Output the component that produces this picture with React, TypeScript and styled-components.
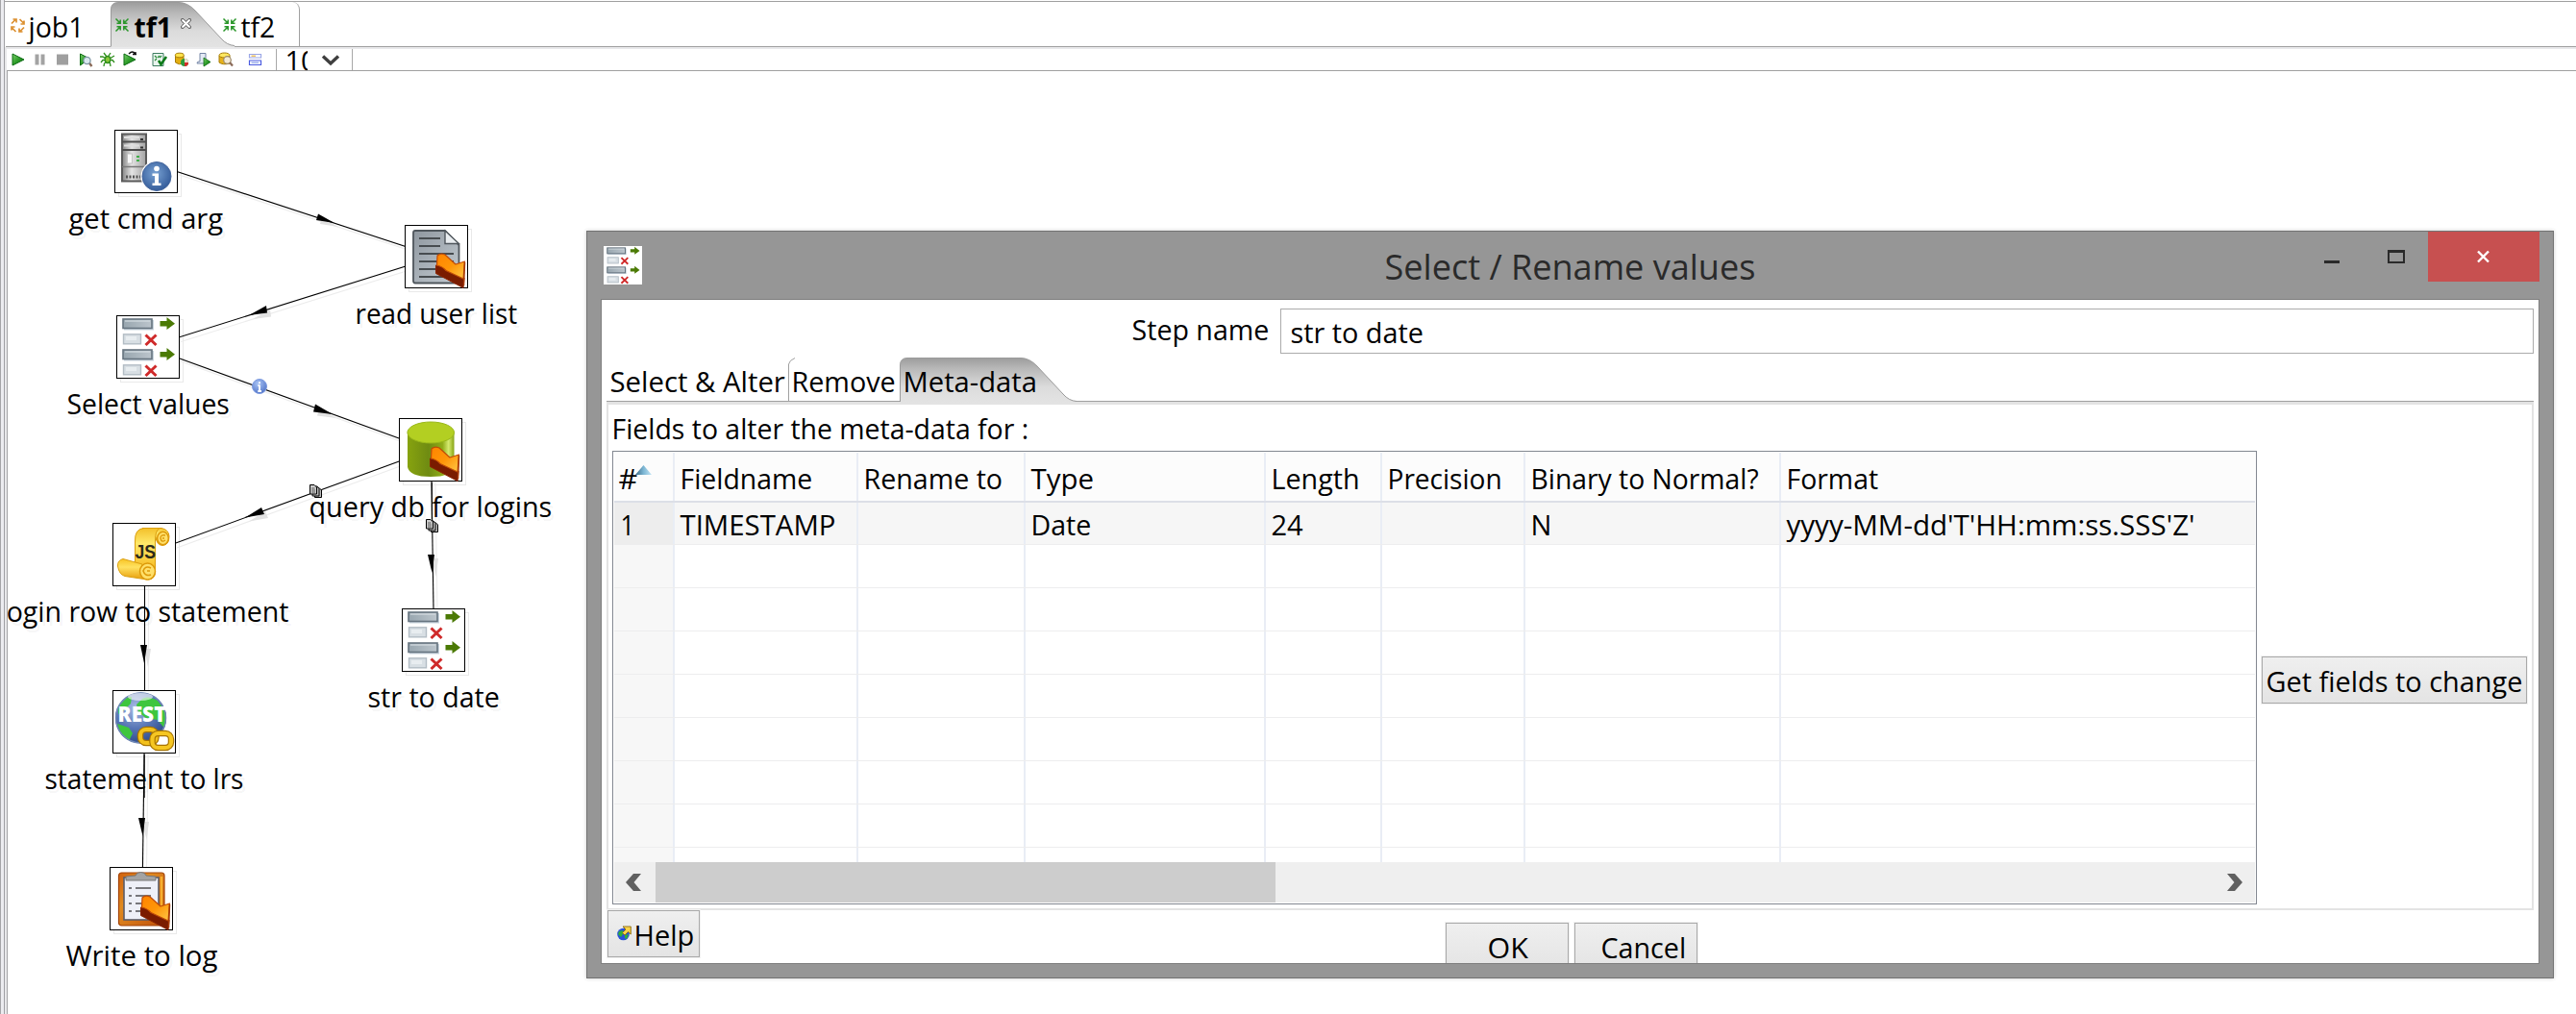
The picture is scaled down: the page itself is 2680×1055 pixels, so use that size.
import React, { useLayoutEffect, useRef, useState } from 'react';
import styled, { createGlobalStyle } from 'styled-components';

const Global = createGlobalStyle`
  * { box-sizing: border-box; }
  html, body { margin: 0; padding: 0; background: #fff; }
  body { overflow: hidden; }
  svg { display: block; flex: none; overflow: visible; }
`;

/* ---------- text condensed to a fixed measure ---------- */

const Measure = styled.span<{ $w: number }>`
  display: block;
  flex: none;
  width: ${(p) => p.$w}px;
  white-space: pre;
`;
const Condensed = styled.span`
  display: inline-block;
  transform-origin: 0 50%;
`;

function Fit({ w, children }: { w: number; children: string }) {
  const ref = useRef<HTMLSpanElement>(null);
  const [scale, setScale] = useState(1);
  useLayoutEffect(() => {
    if (ref.current) setScale((w + 3) / ref.current.offsetWidth);
  }, [w, children]);
  return (
    <Measure $w={w}>
      <Condensed ref={ref} style={{ transform: `translateX(-1.5px) scaleX(${scale})` }}>
        {children}
      </Condensed>
    </Measure>
  );
}

/* ---------- shell ---------- */

const Shell = styled.div`
  position: relative;
  display: flex;
  width: 2680px;
  height: 1055px;
  overflow: hidden;
  background: #fff;
  color: #000;
  font: 29px/40px 'Open Sans', 'Noto Sans', sans-serif;
`;
const Gutter = styled.div`
  width: 5px;
  border-left: 1px solid #a5a5a8;
  border-right: 1px solid #a0a0a4;
  background: #ececf0;
`;
const Main = styled.div`
  flex: 1;
  display: flex;
  flex-direction: column;
  min-width: 0;
  border-top: 1px solid #a0a0a0;
  margin-top: 1px;
`;
const TabStrip = styled.div`
  display: flex;
  height: 47px;
  margin-left: 1px;
  border-bottom: 1px solid #a0a0a0;
`;
const Tab = styled.div<{ $w: number; $pad: number; $gap: number; $bold?: boolean; $closed?: boolean }>`
  position: relative;
  display: flex;
  align-items: flex-start;
  width: ${(p) => p.$w}px;
  height: 47px;
  padding: 6px 0 0 ${(p) => p.$pad}px;
  gap: ${(p) => p.$gap}px;
  font-weight: ${(p) => (p.$bold ? 700 : 400)};
  ${(p) => p.$closed && 'border-right: 1px solid #a0a0a0; border-top-right-radius: 8px; height: 46px;'}
  svg { margin-top: 11px; }
`;
const TabShape = styled.span`
  position: absolute;
  left: 0;
  top: 0;
  svg { margin: 0; }
`;
const Lift = styled.span`
  position: relative;
  display: block;
`;
const CloseWrap = styled.span`
  display: block;
  margin: 2px 0 0 4px;
`;
const Nudge = styled.span`
  margin-left: -12px;
`;
const ToolFrame = styled.div`
  height: 24px;
  padding: 2px 0 0 2px;
  background: #e9e9eb;
`;
const ToolBar = styled.div`
  display: flex;
  align-items: center;
  height: 22px;
  background: #fff;
  overflow: hidden;
`;
const Tool = styled.span<{ $gap: number }>`
  margin-left: ${(p) => p.$gap}px;
`;
const Zoom = styled.div`
  display: flex;
  align-items: center;
  width: 80px;
  height: 22px;
  margin-left: 13px;
  padding-left: 10px;
  gap: 15px;
  border-left: 1px solid #a8a8a8;
  border-right: 1px solid #a8a8a8;
`;
const Clip = styled.div`
  width: 22px;
  height: 22px;
  overflow: hidden;
  line-height: 24px;
`;
const CanvasFrame = styled.div`
  flex: 1;
  padding-left: 2px;
  background: #e9e9eb;
`;
const Canvas = styled.div`
  position: relative;
  height: 100%;
  overflow: hidden;
  border-left: 1px solid #a5a5a8;
  border-top: 1px solid #a0a0a0;
  background: #fff;
`;
/* Canvas children use window coordinates. */
const Plane = styled.div`
  position: absolute;
  left: -8px;
  top: -74px;
  width: 2680px;
  height: 1055px;
`;
const Hops = styled.svg`
  position: absolute;
  left: 0;
  top: 0;
`;
const Step = styled.div<{ $x: number; $y: number }>`
  position: absolute;
  left: ${(p) => p.$x - 200}px;
  top: ${(p) => p.$y}px;
  width: 466px;
  display: flex;
  flex-direction: column;
  align-items: center;
  gap: 6px;
`;
const StepBox = styled.div`
  width: 66px;
  height: 66px;
  border: 1px solid #000;
  background: #fff;
`;
const StepLabel = styled.div`
  text-shadow: 3px 4px 0 rgba(0, 0, 0, 0.055);
`;

/* ---------- dialog ---------- */

const Dialog = styled.div`
  position: absolute;
  left: 610px;
  top: 240px;
  width: 2047px;
  height: 778px;
  display: flex;
  flex-direction: column;
  padding: 0 14px 14px;
  border: 1px solid #737373;
  background: #969696;
  box-shadow: 0 0 4px rgba(0, 0, 0, 0.2);
`;
const TitleBar = styled.div`
  display: grid;
  grid-template-columns: 1fr 384px 1fr;
  height: 70px;
  color: #2a2a2a;
  font-size: 37px;
  line-height: 50px;
`;
const AppIcon = styled.div`
  width: 40px;
  height: 40px;
  margin: 15px 0 0 3px;
  background: #fff;
`;
const Title = styled.div`
  padding-top: 11px;
`;
const WinButtons = styled.div`
  display: flex;
  justify-content: flex-end;
`;
const Minimize = styled.span`
  width: 16px;
  height: 3px;
  margin: 30px 50px 0 0;
  background: #2a2a2a;
`;
const Maximize = styled.span`
  width: 18px;
  height: 14px;
  margin: 19px 24px 0 0;
  border: 2px solid #2a2a2a;
  border-top-width: 3px;
`;
const Close = styled.span`
  display: flex;
  align-items: center;
  justify-content: center;
  width: 116px;
  height: 52px;
  padding-right: 2px;
  background: #c75050;
`;
const Client = styled.div`
  flex: 1;
  display: flex;
  flex-direction: column;
  min-height: 0;
  overflow: hidden;
  border: 1px solid #7f7f7f;
  padding: 9px 5px 0;
  background: #fff;
`;
const NameRow = styled.div`
  display: flex;
  justify-content: flex-end;
  align-items: flex-start;
  gap: 13px;
  height: 51px;
`;
const NameLabel = styled.div`
  padding-top: 2px;
`;
const NameInput = styled.div`
  width: 1304px;
  height: 47px;
  padding: 4px 0 0 11px;
  border: 1px solid #ababab;
`;
const InnerTabs = styled.div`
  display: flex;
  height: 46px;
  border-bottom: 1px solid #a0a0a0;
`;
const InnerTab = styled.div<{ $w: number; $pad: number }>`
  position: relative;
  width: ${(p) => p.$w}px;
  height: 46px;
  padding: 5px 0 0 ${(p) => p.$pad}px;
`;
const Panel = styled.div`
  height: 529px;
  flex: none;
  padding: 4px 3px 0 4px;
  border: 2px solid #e3e3e3;
  border-top-width: 3px;
`;
const PanelLabel = styled.div`
  height: 44px;
  padding: 1px 0 0 1px;
`;
const PanelBody = styled.div`
  display: flex;
  align-items: center;
  justify-content: space-between;
  height: 472px;
  padding-right: 2px;
`;
const Table = styled.div`
  display: flex;
  flex-direction: column;
  width: 1711px;
  height: 472px;
  padding: 1px;
  border: 1px solid #828790;
`;
const COLS = '63px 191px 174px 250px 121px 149px 266px 1fr';
const HeadRow = styled.div`
  display: grid;
  grid-template-columns: ${COLS};
  height: 52px;
  background: #fcfcfc;
  border-bottom: 2px solid #dcdfe7;
`;
const Body = styled.div`
  flex: 1;
  overflow: hidden;
`;
const Row = styled.div<{ $active?: boolean }>`
  display: grid;
  grid-template-columns: ${COLS};
  height: ${(p) => (p.$active ? 44 : 45)}px;
  border-bottom: 1px solid #ededee;
  background: ${(p) => (p.$active ? '#f6f6f6' : '#fff')};
  & > :first-child { background: ${(p) => (p.$active ? '#ededed' : '#f7f7f7')}; }
`;
const Cell = styled.div<{ $top?: number; $pad?: number }>`
  position: relative;
  min-width: 0;
  padding: ${(p) => p.$top ?? 3}px 0 0 ${(p) => p.$pad ?? 7}px;
  border-right: 2px solid #e9edf5;
  &:last-child { border-right: 0; }
`;
const SortMark = styled.span`
  position: absolute;
  left: 22px;
  top: 13px;
`;
const ScrollBar = styled.div`
  display: flex;
  align-items: center;
  height: 42px;
  padding: 0 13px 0 12px;
  background: #efefef;
`;
const Thumb = styled.div`
  width: 645px;
  height: 42px;
  margin: 0 auto 0 15px;
  background: #cdcdcd;
`;
const Button = styled.div<{ $w: number; $pad: number }>`
  display: flex;
  width: ${(p) => p.$w}px;
  height: 49px;
  padding: 5px 0 0 ${(p) => p.$pad}px;
  border: 1px solid #a9a9a9;
  background: linear-gradient(#efefef, #e4e4e4);
  box-shadow: 0 0 0 1px #f1f1f1;
`;
const SideActions = styled.div`
  padding-top: 5px;
`;
const Footer = styled.div`
  display: flex;
  align-items: flex-start;
  height: 54px;
  padding-left: 1px;
  flex: none;
`;
const Confirm = styled.div`
  display: flex;
  gap: 6px;
  margin: 13px 0 0 776px;
`;
const HelpIcon = styled.span`
  margin: 10px 4px 0 0;
`;

/* ---------- icons ---------- */

const Defs = () => (
  <svg width="0" height="0">
    <defs>
      <linearGradient id="steel" x1="0" y1="0" x2="1" y2="0"><stop offset="0" stopColor="#858585" /><stop offset=".4" stopColor="#e4e4e4" /><stop offset="1" stopColor="#a2a2a2" /></linearGradient>
      <linearGradient id="paper" x1="0" y1="0" x2="1" y2="1"><stop offset="0" stopColor="#8f979f" /><stop offset="1" stopColor="#c3cbd2" /></linearGradient>
      <linearGradient id="orange" x1="0" y1="0" x2="1" y2="1"><stop offset="0" stopColor="#ff8400" /><stop offset=".5" stopColor="#ff9608" /><stop offset="1" stopColor="#ffc848" /></linearGradient>
      <linearGradient id="can" x1="0" y1="0" x2="1" y2="0"><stop offset="0" stopColor="#87a30f" /><stop offset=".45" stopColor="#6f8b12" /><stop offset=".75" stopColor="#8fad18" /><stop offset=".88" stopColor="#d5ea70" /><stop offset="1" stopColor="#86a312" /></linearGradient>
      <radialGradient id="info" cx=".45" cy=".4" r=".65"><stop offset="0" stopColor="#79a2d3" /><stop offset="1" stopColor="#2f5796" /></radialGradient>
      <radialGradient id="infoSmall" cx=".4" cy=".3" r=".8"><stop offset="0" stopColor="#a9c4f5" /><stop offset="1" stopColor="#4a6ec4" /></radialGradient>
      <linearGradient id="gold" x1="0" y1="0" x2="0" y2="1"><stop offset="0" stopColor="#f3c02a" /><stop offset=".3" stopColor="#ffe96a" /><stop offset="1" stopColor="#f2a808" /></linearGradient>
      <linearGradient id="goldV" x1="0" y1="0" x2="0" y2="1"><stop offset="0" stopColor="#f8c424" /><stop offset=".4" stopColor="#ffe261" /><stop offset="1" stopColor="#e79c0a" /></linearGradient>
      <radialGradient id="globe" cx=".4" cy=".3" r=".75"><stop offset="0" stopColor="#a8bce6" /><stop offset=".55" stopColor="#5674b4" /><stop offset="1" stopColor="#2a4684" /></radialGradient>
      <linearGradient id="board" x1="0" y1="0" x2="1" y2="1"><stop offset="0" stopColor="#d0600c" /><stop offset=".35" stopColor="#e08a20" /><stop offset="1" stopColor="#c0500a" /></linearGradient>
      <linearGradient id="bar" x1="0" y1="0" x2="1" y2="0"><stop offset="0" stopColor="#98a6af" /><stop offset="1" stopColor="#bcc5cc" /></linearGradient>
      <linearGradient id="tabfill" x1="0" y1="0" x2="0" y2="1"><stop offset="0" stopColor="#9d9d9d" /><stop offset=".25" stopColor="#b9b9b9" /><stop offset=".65" stopColor="#dcdcdc" /><stop offset="1" stopColor="#e3e3e3" /></linearGradient>
      <linearGradient id="sort" x1="0" y1="0" x2="1" y2="0"><stop offset="0" stopColor="#3c6a86" /><stop offset=".5" stopColor="#7cb6d4" /><stop offset="1" stopColor="#c4e6f6" /></linearGradient>
      <linearGradient id="play" x1="0" y1="0" x2="1" y2="1"><stop offset="0" stopColor="#7ccf6c" /><stop offset=".5" stopColor="#2f9e2a" /><stop offset="1" stopColor="#0d6e12" /></linearGradient>
    </defs>
  </svg>
);

const Svg = ({ children, size = 64, box = 64 }: { children: React.ReactNode; size?: number; box?: number }) => (
  <svg width={size} height={size} viewBox={`0 0 ${box} ${box}`}>{children}</svg>
);

const OutArrow = () => (
  <g strokeLinejoin="round">
    <path d="M31.500 41V49.500L60 64.500L61 54L40 43Z" fill="#7a1c00" stroke="#8b2500" strokeWidth="1" />
    <path d="M33 31Q36 28 41 30L52 40L61.500 37L60 55L42 46.500Q38 42 32.500 41Z" fill="url(#orange)" stroke="#c04c08" strokeWidth="1.200" />
    <path d="M61.500 38L60.500 62" stroke="#a83a06" strokeWidth="1.500" />
  </g>
);

const ServerIcon = () => (
  <Svg>
    <rect x="7" y="3.500" width="25" height="49" fill="url(#steel)" stroke="#5a5a5a" strokeWidth="2" />
    <path d="M7 11.500H32M7 20H32" stroke="#4d4d4d" strokeWidth="2.200" />
    <path d="M9 7H25M9 15.500H25" stroke="#dedede" strokeWidth="2" />
    <path d="M26 9H29M26 17.500H29" stroke="#333" strokeWidth="2" />
    <path d="M7 37.500H32" stroke="#777" strokeWidth="1.500" />
    <rect x="12.500" y="24" width="5" height="10" fill="#f6f6f6" stroke="#bbb" strokeWidth=".8" />
    <path d="M22 27H25M22 31H25" stroke="#3fae49" strokeWidth="2" />
    <path d="M11 48H26" stroke="#555" strokeWidth="3" strokeDasharray="2 1.500" />
    <circle cx="43" cy="47.500" r="16.500" fill="#fff" />
    <circle cx="43" cy="47.500" r="15" fill="url(#info)" stroke="#44659c" strokeWidth="1" />
    <circle cx="43" cy="39.500" r="2.800" fill="#fff" />
    <path d="M38.500 44.500H45V54.500H47.500V57H38.500V54.500H41V47H38.500Z" fill="#fff" />
  </Svg>
);

const DocIcon = () => (
  <Svg>
    <path d="M10 5H41L55.500 20V57Q55.500 59.500 53 59.500H10Q8 59.500 8 57V7Q8 5 10 5Z" fill="url(#paper)" stroke="#4f565c" strokeWidth="1.800" />
    <path d="M41 5V18.500H55.500Z" fill="#e9edf0" stroke="#4f565c" strokeWidth="1.400" />
    <path d="M14 13H36M14 21H36M14 29H50M14 37H50M14 45H50M14 53H44" stroke="#474c50" strokeWidth="2" />
    <OutArrow />
  </Svg>
);

const SelectIcon = ({ size = 64 }: { size?: number }) => (
  <Svg size={size}>
    {[0, 32].map((y) => (
      <g key={y} transform={`translate(0 ${y})`}>
        <rect x="7" y="4" width="31" height="10.500" fill="#c9d5de" />
        <rect x="6" y="3" width="30" height="9.500" fill="url(#bar)" stroke="#66747f" strokeWidth="1.600" />
        <path d="M8 5H34" stroke="#d5dde2" strokeWidth="1.200" />
        <path d="M44.500 5H51.500V1L60 7.800L51.500 14V10.500H44.500Z" fill="#4b7a05" />
        <rect x="6.500" y="18.800" width="18" height="10" fill="#d8dfe4" stroke="#b3bdc5" strokeWidth="1.400" />
        <path d="M9 21H20V25H9Z" fill="#e8edf0" />
        <path d="M29.500 19.500L40.500 30M40.500 19.500L29.500 30" stroke="#cf2a2a" strokeWidth="3" />
      </g>
    ))}
  </Svg>
);

const DbIcon = () => (
  <Svg>
    <path d="M8 14V50Q10 60 32 60Q55 60 56.500 50V14Z" fill="url(#can)" />
    <ellipse cx="32.200" cy="14" rx="24.300" ry="11" fill="#b3cf22" stroke="#9ab81a" strokeWidth="1" />
    <OutArrow />
  </Svg>
);

const ScriptIcon = () => (
  <Svg>
    <path d="M30 4.500H50Q57.500 6 58 13Q58 22 51 22.500Q45 22 44 14Z" fill="url(#gold)" stroke="#d99a0a" strokeWidth="1" />
    <path d="M22.500 18Q22 5 32 4.500H48Q43.500 7 43.500 17V50Q43 58 36 58Q26 54 22.500 40Z" fill="url(#gold)" stroke="#dba012" strokeWidth="1" />
    <ellipse cx="51.500" cy="15" rx="5.800" ry="6.800" fill="#ffe06a" stroke="#dd9a0a" strokeWidth="1.500" />
    <path d="M54 12Q49 11 49 15Q50 20 54 17M51 15H53" fill="none" stroke="#dd9a0a" strokeWidth="1.400" />
    <path d="M10 36.500Q4 38 4.500 44Q6 53 12 54.500L35 58Q28 52 30 42Z" fill="url(#goldV)" stroke="#dba012" strokeWidth="1" />
    <ellipse cx="35.500" cy="49.500" rx="8" ry="8.500" fill="#ffe06a" stroke="#dd9a0a" strokeWidth="1.500" />
    <path d="M39 46Q33 43 31 49Q33 55 39 53M35 49H38" fill="none" stroke="#dd9a0a" strokeWidth="1.600" />
    <text x="22.500" y="35.500" fontFamily="Liberation Sans" fontWeight="700" fontSize="20" textLength="21.500" lengthAdjust="spacingAndGlyphs" fill="#2b2a1c">JS</text>
  </Svg>
);

const RestIcon = () => (
  <Svg>
    <clipPath id="globeClip"><circle cx="28.500" cy="28" r="26.500" /></clipPath>
    <circle cx="28.500" cy="28" r="26.500" fill="url(#globe)" />
    <g clipPath="url(#globeClip)" fill="#3ec63e">
      <path d="M5 14Q12 5 19 6L18 13L11 20L5 24Z" />
      <path d="M30 8Q36 4 46 10L56 24L54 40L46 30L34 28L26 22L24 14Z" />
      <path d="M4 34L16 38L20 44L16 52L8 46Z" />
    </g>
    <circle cx="28.500" cy="28" r="26" fill="none" stroke="#6f87b6" strokeWidth="1.500" />
    <ellipse cx="28" cy="6" rx="13" ry="4" fill="#fff" opacity=".6" />
    <text x="4.500" y="32" fontFamily="Open Sans" fontWeight="800" fontSize="23" textLength="50" lengthAdjust="spacingAndGlyphs" fill="#fff">REST</text>
    <g fill="none">
      <rect x="28" y="40" width="16.500" height="14" rx="6" stroke="#a87400" strokeWidth="6.500" />
      <rect x="28" y="40" width="16.500" height="14" rx="6" stroke="#f3c11c" strokeWidth="4.200" />
      <rect x="40.500" y="44" width="19.500" height="15" rx="6" stroke="#a87400" strokeWidth="6.500" />
      <rect x="40.500" y="44" width="19.500" height="15" rx="6" stroke="#f5c622" strokeWidth="4.200" />
    </g>
  </Svg>
);

const LogIcon = () => (
  <Svg>
    <rect x="8.500" y="5" width="47.500" height="55" rx="3" fill="url(#board)" stroke="#a2440a" strokeWidth="1.200" />
    <path d="M53 9V50" stroke="#f6b030" strokeWidth="2.500" />
    <rect x="14" y="10" width="36" height="44" fill="#eef0f8" stroke="#5d5d66" strokeWidth="1.600" />
    <path d="M16 13V9L26 8Q27 4.500 31.500 4.500Q36 4.500 37 8L47 9V13Z" fill="#a3a3a3" stroke="#777" strokeWidth="1" />
    <path d="M19 21H22M19 29H22M19 37H22M19 45H22M26 21H42M26 29H42M26 37H36M26 45H32" stroke="#77777c" strokeWidth="2" />
    <OutArrow />
  </Svg>
);

const Triangle = () => <path d="M1 2L13 8L1 14Z" fill="url(#play)" stroke="#0a6a10" strokeWidth="1" strokeLinejoin="round" />;

const ConvergeIcon = () => (
  <svg width="14" height="14" viewBox="0 0 14 14" fill="none" stroke="#2a962a" strokeWidth="1.500">
    <path d="M.5.5L5 5M1.500 5.200H5.200V1.500M13.500.5L9 5M12.500 5.200H8.800V1.500M.5 13.500L5 9M1.500 8.800H5.200V12.500M13.500 13.500L9 9M12.500 8.800H8.800V12.500" />
  </svg>
);
const JobIcon = () => (
  <svg width="15" height="15" viewBox="0 0 15 15" fill="none" stroke="#dc9030" strokeWidth="1.700">
    <path d="M1 5.500L5.500 1M2.500 1H6V4.500M9.500 1L14 5.500M14 2.500V6H10.500M14 9.500L9.500 14M12.500 14H9V10.500M5.500 14L1 9.500M1 12.500V9H4.500" />
  </svg>
);
const CloseGlyph = () => (
  <svg width="11" height="11" viewBox="0 0 11 11">
    <path d="M.7.7H3L5.500 3.500L8 .7H10.300V3L7.500 5.500L10.300 8V10.300H8L5.500 7.500L3 10.300H.7V8L3.500 5.500L.7 3Z" fill="#fff" stroke="#555" strokeWidth="1" />
  </svg>
);

const SelectedTab = ({ w, h }: { w: number; h: number }) => {
  const edge = `V8Q.5 .5 8 .5H${w - 58}Q${w - 49} .5 ${w - 41} 9L${w - 14} ${h - 8}Q${w - 8} ${h - 1} ${w} ${h - 0.5}`;
  return (
    <svg width={w} height={h + 1} viewBox={`0 0 ${w} ${h + 1}`}>
      <path d={`M.5 ${h + 1}${edge}V${h + 1}Z`} fill="url(#tabfill)" />
      <path d={`M.5 ${h}${edge}`} fill="none" stroke="#9a9a9a" />
    </svg>
  );
};

const tools: { gap: number; icon: React.ReactNode }[] = [
  { gap: 5, icon: <Triangle /> },
  { gap: 6, icon: <path d="M2.500 2.500H6.500V13.500H2.500ZM8.500 2.500H12.500V13.500H8.500Z" fill="#a3a3a3" /> },
  { gap: 8, icon: <path d="M1 2.500H13V13.500H1Z" fill="#9f9f9f" /> },
  { gap: 8, icon: <g><path d="M1.500 2L11 7L1.500 14Z" fill="url(#play)" stroke="#0a6a10" /><path d="M10.500 11L13.500 15" stroke="#8a6a58" strokeWidth="2.400" /><circle cx="8.500" cy="9" r="3.600" fill="#dbe8f0" stroke="#7f96a3" strokeWidth="1.300" /></g> },
  { gap: 6, icon: <g stroke="#2f8f1d" strokeWidth="1.300" fill="none"><ellipse cx="8" cy="8" rx="2.800" ry="3.500" fill="#8ac63a" /><path d="M0 5L3 5L6 7M4 1L7 5M11 1L8.500 5M15 4L10 7M1 11L3 8.500H6M4 15L4.500 12L7 10M11 15L10.500 12L9 10M15 11L13 8.500H10" /></g> },
  { gap: 8, icon: <g><Triangle /><path d="M6 2Q10 -2 12.500 2M10 2.500H14M13 0V3" stroke="#111" strokeWidth="1.400" fill="none" /></g> },
  { gap: 14, icon: <g><path d="M1 1.500H12V14.500H1Z" fill="#e9f4ee" stroke="#3d7d60" /><path d="M3 4L5 6M8 4L6 6M3 9L5 7M10 4L8 6" stroke="#2a8a3a" strokeWidth="1.200" /><path d="M7 9L9.500 13L15 5" fill="none" stroke="#0d7a18" strokeWidth="2.600" /></g> },
  { gap: 7, icon: <g><path d="M1.500 4V11Q5 14 10 12V4Z" fill="#e3ae10" stroke="#a67c08" /><ellipse cx="5.800" cy="3.500" rx="4.500" ry="2.300" fill="#ffe34a" stroke="#a67c08" /><circle cx="11" cy="11" r="4" fill="#2e9b3b" /><path d="M11 11V7A4 4 0 0 1 15 11Z" fill="#f3ded0" /><path d="M11 11H15A4 4 0 0 1 11 15Z" fill="#d92b2b" /></g> },
  { gap: 7, icon: <g><path d="M4 1.500H10V12H1Q1 10 3 10H4Z" fill="#e4eaf5" stroke="#7485a5" /><path d="M8 6L15 10.500L8 15Z" fill="url(#play)" stroke="#0a6a10" strokeWidth=".8" /></g> },
  { gap: 7, icon: <g><path d="M1 4V11Q5 14 12 12V4Z" fill="#e7b21a" stroke="#a67c08" /><ellipse cx="6.500" cy="3.500" rx="5.500" ry="2.500" fill="#ffe860" stroke="#a67c08" /><circle cx="9.500" cy="8.500" r="3.800" fill="#f3ead6" stroke="#9c8a6a" strokeWidth="1.200" /><path d="M12 11L15 14.500" stroke="#8a6a58" strokeWidth="2.200" /></g> },
  { gap: 15, icon: <g fill="#fff" strokeWidth="1.200"><path d="M1.500 2.500H13.500V6H1.500Z" stroke="#9aa6e6" /><path d="M3.500 4.200H8" stroke="#e8b23a" /><path d="M1.500 9H13.500V13.500H1.500Z" stroke="#4a5be0" /><path d="M3.500 11.200H11" stroke="#8aa0e8" /></g> },
];

/* ---------- diagram data ---------- */

const steps = [
  { x: 119, y: 135, label: 'get cmd arg', w: 158, icon: <ServerIcon /> },
  { x: 421, y: 234, label: 'read user list', w: 166, icon: <DocIcon /> },
  { x: 121, y: 328, label: 'Select values', w: 166, icon: <SelectIcon /> },
  { x: 415, y: 435, label: 'query db for logins', w: 250, icon: <DbIcon /> },
  { x: 117, y: 544, label: 'login row to statement', w: 298, icon: <ScriptIcon /> },
  { x: 418, y: 633, label: 'str to date', w: 134, icon: <SelectIcon /> },
  { x: 117, y: 718, label: 'statement to lrs', w: 204, icon: <RestIcon /> },
  { x: 114, y: 902, label: 'Write to log', w: 155, icon: <LogIcon /> },
];

const hops = [
  { line: [152, 168, 454, 267], head: '348,232 331,222.500 329,229' },
  { line: [454, 267, 154, 361], head: '259,328 277,318 278,325.500' },
  { line: [154, 361, 448, 468], head: '346,431 328,420.500 326,428.500' },
  { line: [448, 468, 150, 577], head: '255,538.500 272,528 275,535' },
  { line: [448.5, 468, 451.5, 666], head: '449.500,596 445,577 452,577' },
  { line: [150.5, 577, 150.5, 751], head: '150,690 146,671 153,671' },
  { line: [150.5, 751, 148, 935], head: '148.500,870 144,851 151,851' },
];

const CopyMark = ({ x, y }: { x: number; y: number }) => (
  <g transform={`translate(${x} ${y})`}>
    <path d="M5.500 3.500H10L12.500 6V13.500H5.500Z" fill="#bbb" stroke="#000" />
    <path d="M3 2H8L10 4.500V12H3Z" fill="#bbb" stroke="#000" />
    <path d="M.5.500H5L7.500 3V10H.5Z" fill="#ccc" stroke="#000" />
    <path d="M2 4H5.500M2 6H6M2 8H6" stroke="#555" strokeWidth=".9" />
  </g>
);

const HopLines = ({ shadow }: { shadow?: boolean }) => (
  <g stroke={shadow ? '#ececec' : '#000'} fill={shadow ? '#e2e2e2' : '#000'} transform={shadow ? 'translate(4 4)' : undefined}>
    {hops.map((h) => (
      <g key={h.head}>
        <line x1={h.line[0]} y1={h.line[1]} x2={h.line[2]} y2={h.line[3]} strokeWidth="1.100" />
        <polygon points={h.head} stroke="none" />
      </g>
    ))}
    {shadow && steps.map((s) => (
      <rect key={s.label} x={s.x + 0.5} y={s.y + 0.5} width="65" height="65" fill="none" stroke="#e9e9e9" />
    ))}
  </g>
);

const columns: [string, number][] = [
  ['#', 17], ['Fieldname', 135], ['Rename to', 142], ['Type', 63],
  ['Length', 89], ['Precision', 116], ['Binary to Normal?', 234], ['Format', 93],
];
const record: [string, number][] = [
  ['1', 12], ['TIMESTAMP', 159], ['', 0], ['Date', 60], ['24', 30], ['', 0], ['N', 19], ["yyyy-MM-dd'T'HH:mm:ss.SSS'Z'", 422],
];

export default function App() {
  return (
    <Shell>
      <Global />
      <Gutter />
      <Main>
        <TabStrip>
          <Tab $w={109} $pad={5} $gap={5}>
            <JobIcon />
            <Fit w={55}>job1</Fit>
          </Tab>
          <Tab $w={129} $pad={5} $gap={7} $bold>
            <TabShape><SelectedTab w={129} h={46} /></TabShape>
            <Lift><ConvergeIcon /></Lift>
            <Lift><Fit w={36}>tf1</Fit></Lift>
            <Lift><CloseWrap><CloseGlyph /></CloseWrap></Lift>
          </Tab>
          <Tab $w={68} $pad={0} $gap={6} $closed>
            <Nudge><ConvergeIcon /></Nudge>
            <Fit w={33}>tf2</Fit>
          </Tab>
        </TabStrip>
        <ToolFrame>
          <ToolBar>
            {tools.map((t, i) => (
              <Tool key={i} $gap={t.gap}><Svg size={16} box={16}>{t.icon}</Svg></Tool>
            ))}
            <Zoom>
              <Clip><Fit w={47}>100</Fit></Clip>
              <svg width="18" height="11" viewBox="0 0 18 11"><path d="M1 1.500L9 9L17 1.500" fill="none" stroke="#3f3f3f" strokeWidth="3.400" /></svg>
            </Zoom>
          </ToolBar>
        </ToolFrame>
        <CanvasFrame>
          <Canvas>
            <Plane>
              <Hops width="600" height="1055"><HopLines shadow /><HopLines /></Hops>
              {steps.map((s) => (
                <Step key={s.label} $x={s.x} $y={s.y}>
                  <StepBox>{s.icon}</StepBox>
                  <StepLabel><Fit w={s.w}>{s.label}</Fit></StepLabel>
                </Step>
              ))}
              <Hops width="600" height="1055">
                <circle cx="270" cy="402" r="7.500" fill="url(#infoSmall)" stroke="#7d9be0" />
                <path d="M270 397.200V399.200M270 400.500V407M268.300 401.200H270M268.300 407H272" stroke="#fff" strokeWidth="1.800" />
                <path d="M449.300 502V540M150.500 611V660M150.200 785V830" stroke="#000" strokeWidth="1" />
                <CopyMark x={322} y={504} />
                <CopyMark x={443} y={540} />
              </Hops>
            </Plane>
          </Canvas>
        </CanvasFrame>
      </Main>

      <Dialog>
        <TitleBar>
          <AppIcon><SelectIcon size={40} /></AppIcon>
          <Title><Fit w={383}>Select / Rename values</Fit></Title>
          <WinButtons>
            <Minimize />
            <Maximize />
            <Close>
              <svg width="15" height="12" viewBox="0 0 15 12"><path d="M2 .5L13 11.500M13 .5L2 11.500" stroke="#fff" strokeWidth="2.400" /></svg>
            </Close>
          </WinButtons>
        </TitleBar>
        <Client>
          <NameRow>
            <NameLabel><Fit w={140}>Step name</Fit></NameLabel>
            <NameInput><Fit w={135}>str to date</Fit></NameInput>
          </NameRow>
          <InnerTabs>
            <InnerTab $w={189} $pad={5}><Fit w={179}>Select &amp; Alter</Fit></InnerTab>
            <InnerTab $w={116} $pad={5}>
              <TabShape><svg width="8" height="46" viewBox="0 0 8 46"><path d="M.5 46V7Q1 3 7 .5" fill="none" stroke="#a0a0a0" /></svg></TabShape>
              <Fit w={105}>Remove</Fit>
            </InnerTab>
            <InnerTab $w={184} $pad={5}>
              <TabShape><SelectedTab w={184} h={46} /></TabShape>
              <Lift><Fit w={136}>Meta-data</Fit></Lift>
            </InnerTab>
          </InnerTabs>
          <Panel>
            <PanelLabel><Fit w={431}>Fields to alter the meta-data for :</Fit></PanelLabel>
            <PanelBody>
              <Table>
                <HeadRow>
                  {columns.map(([name, w], i) => (
                    <Cell key={name} $top={7} $pad={i ? 7 : 6}>
                      <Fit w={w}>{name}</Fit>
                      {i === 0 && (
                        <SortMark><svg width="17" height="10" viewBox="0 0 17 10"><path d="M0 10L8.500 0L17 10Z" fill="url(#sort)" /></svg></SortMark>
                      )}
                    </Cell>
                  ))}
                </HeadRow>
                <Body>
                  <Row $active>
                    {record.map(([value, w], i) => (
                      <Cell key={i} $top={3} $pad={i ? 7 : 8}>{value && <Fit w={w}>{value}</Fit>}</Cell>
                    ))}
                  </Row>
                  {Array.from({ length: 8 }, (_, r) => (
                    <Row key={r}>{columns.map(([name]) => <Cell key={name} />)}</Row>
                  ))}
                </Body>
                <ScrollBar>
                  <svg width="16" height="18" viewBox="0 0 16 18"><path d="M8 0H16L8.500 9L16 18H8L0 9Z" fill="#606060" /></svg>
                  <Thumb />
                  <svg width="16" height="18" viewBox="0 0 16 18"><path d="M0 0H8L16 9L8 18H0L7.500 9Z" fill="#606060" /></svg>
                </ScrollBar>
              </Table>
              <SideActions>
                <Button $w={276} $pad={5}><Fit w={264}>Get fields to change</Fit></Button>
              </SideActions>
            </PanelBody>
          </Panel>
          <Footer>
            <Button $w={96} $pad={9}>
              <HelpIcon>
                <svg width="15" height="16" viewBox="0 0 15 16">
                  <circle cx="6.500" cy="9" r="6.300" fill="#2a52d8" />
                  <path d="M2 6L6 5L6 9L4 12L1 9ZM8 10L12 9L10 14L8 13Z" fill="#2fae3c" />
                  <path d="M6 1H14.300V9L11.500 6.500L8 10L5.500 7.500L9 4Z" fill="#f7d24a" stroke="#8a6a10" strokeWidth=".9" />
                </svg>
              </HelpIcon>
              <Fit w={60}>Help</Fit>
            </Button>
            <Confirm>
              <Button $w={128} $pad={44}><Fit w={39}>OK</Fit></Button>
              <Button $w={128} $pad={28}><Fit w={86}>Cancel</Fit></Button>
            </Confirm>
          </Footer>
        </Client>
      </Dialog>
      <Defs />
    </Shell>
  );
}
